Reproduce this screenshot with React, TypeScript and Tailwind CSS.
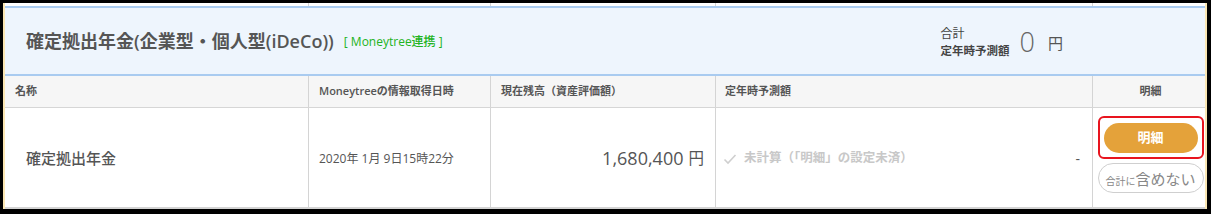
import React from "react";

const font = { fontFamily: '"Open Sans", "Noto Sans CJK JP", sans-serif' };

export default function App() {
  return (
    <div
      className="w-[1211px] h-[214px] bg-black pt-[3px] pl-[3px] pr-[4px] pb-[5px] overflow-hidden"
      style={font}
    >
      <div className="h-full border-l-2 border-r-2 border-[#fbe7b4] bg-white flex flex-col">
        {/* remnant of previous row */}
        <div className="grid grid-cols-[303px_182px_225px_377px_1fr] h-[3px]">
          <div />
          <div className="border-l border-[#d4d4d4]" />
          <div className="border-l border-[#d4d4d4]" />
          <div className="border-l border-[#d4d4d4]" />
          <div className="border-l border-[#d4d4d4]" />
        </div>
        {/* blue header */}
        <div className="h-[70px] border-t-2 border-b-2 border-[#a9cbf0] bg-[#eef5fd] flex items-center">
          <div className="pl-[21px] text-[18px] font-semibold text-[#555] leading-none">
            確定拠出年金(企業型・個人型(iDeCo))
          </div>
          <div className="ml-[10px] text-[12px] font-medium text-[#22b322] leading-none pt-[2px]">
            [ Moneytree連携 ]
          </div>
          <div className="ml-auto mr-[142px] flex items-center">
            <div className="flex flex-col text-[#444] leading-none pt-[2px]">
              <span className="text-[12px]">合計</span>
              <span className="text-[11.5px] font-bold mt-[5px]">定年時予測額</span>
            </div>
            <span className="ml-[10px] text-[27px] text-[#666] leading-none font-light">0</span>
            <span className="ml-[13px] text-[15px] text-[#555] leading-none pt-[4px]">円</span>
          </div>
        </div>
        {/* table head */}
        <div className="grid grid-cols-[303px_182px_225px_377px_1fr] h-[32px] bg-[#f6f6f6] border-b border-[#d6d6d6] text-[11px] font-bold text-[#555]">
          <div className="pl-[10px] flex items-center">名称</div>
          <div className="border-l border-[#d4d4d4] pl-[10px] flex items-center font-semibold">Moneytreeの情報取得日時</div>
          <div className="border-l border-[#d4d4d4] pl-[10px] flex items-center">現在残高（資産評価額）</div>
          <div className="border-l border-[#d4d4d4] pl-[9px] flex items-center">定年時予測額</div>
          <div className="border-l border-[#d4d4d4] flex items-center justify-center pl-[3px]">明細</div>
        </div>
        {/* body row */}
        <div className="grid grid-cols-[303px_182px_225px_377px_1fr] h-[101px] border-b-2 border-[#d4d4d4]">
          <div className="pl-[21px] flex items-center text-[15px] font-medium text-[#555] pt-[2px]">確定拠出年金</div>
          <div className="border-l border-[#d4d4d4] pl-[10px] flex items-center text-[12px] text-[#555] pt-[2px]">
            2020年 1月 9日15時22分
          </div>
          <div className="border-l border-[#d4d4d4] pr-[11px] flex items-center justify-end text-[#555] pt-[2px]">
            <span className="text-[18px]">1,680,400</span>
            <span className="text-[15.5px] ml-[5px]">円</span>
          </div>
          <div className="border-l border-[#d4d4d4] pl-[7px] pr-[12px] flex items-center pt-[2px]">
            <svg width="14" height="14" viewBox="0 0 14 14" className="mr-[7px]">
              <path d="M1.5 7.5 L5 11 L12.5 3" fill="none" stroke="#cfcfcf" strokeWidth="1.6" />
            </svg>
            <span className="text-[12.5px] font-bold text-[#c8c8c8]">未計算（「明細」の設定未済）</span>
            <span className="ml-auto text-[14px] text-[#555]">-</span>
          </div>
          <div className="border-l border-[#d4d4d4] flex flex-col items-center pt-[8px] pl-[3px]">
            <div className="w-[106px] h-[43px] border-2 border-[#e8141e] rounded-[6px] flex items-center justify-center">
              <div className="w-[94px] h-[30px] rounded-full bg-[#e4a23a] flex items-center justify-center text-white text-[13px] font-bold">
                明細
              </div>
            </div>
            <div className="mt-[4px] w-[106px] h-[30px] rounded-full border border-[#cfcfcf] flex items-end justify-center pb-[5px] text-[#888] leading-none">
              <span className="text-[10px] mb-[1px]">合計に</span>
              <span className="text-[15px]">含めない</span>
            </div>
          </div>
        </div>
      </div>
    </div>
  );
}
